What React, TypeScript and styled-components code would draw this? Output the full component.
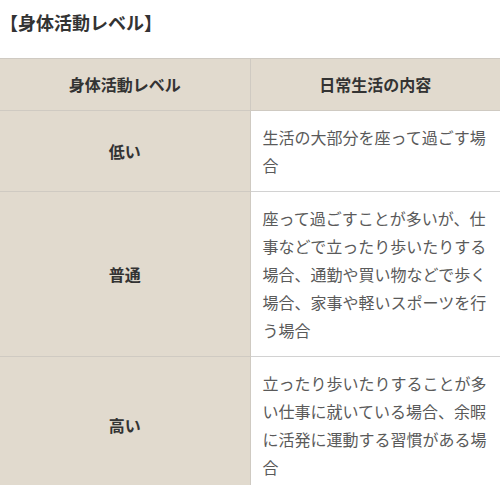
import React from "react";
import styled, { createGlobalStyle } from "styled-components";

const Global = createGlobalStyle`
  html, body { margin: 0; padding: 0; background: #fff; }
  body { font-family: "Noto Sans CJK JP", "Noto Sans", sans-serif; }
`;

const Page = styled.div`
  width: 500px;
`;

const Title = styled.h3`
  margin: 0;
  padding: 8px 0 0 0;
  height: 58px;
  box-sizing: border-box;
  font-size: 18px;
  line-height: 28px;
  font-weight: 700;
  color: #333;
`;

const Table = styled.table`
  width: 500px;
  border-collapse: collapse;
  table-layout: fixed;
`;

const HeadCell = styled.th`
  background: #e1dace;
  color: #333;
  font-size: 16px;
  line-height: 27px;
  font-weight: 700;
  padding: 12px;
  text-align: center;
  border: 1px solid #cfcac2;
  border-left: none;
  &:last-child { border-right: none; }
`;

const LevelCell = styled.th`
  background: #e1dace;
  color: #333;
  font-size: 16px;
  line-height: 28px;
  font-weight: 700;
  padding: 12px;
  text-align: center;
  vertical-align: middle;
  border: 1px solid #cfcac2;
  border-left: none;
`;

const BodyCell = styled.td`
  background: #fff;
  color: #5a5a5a;
  font-size: 16px;
  line-height: 28px;
  font-weight: 400;
  padding: 12px;
  text-align: left;
  vertical-align: top;
  border: 1px solid #d2d2d2;
  border-right: none;
`;

const rows = [
  { level: "低い", text: "生活の大部分を座って過ごす場合" },
  {
    level: "普通",
    text: "座って過ごすことが多いが、仕事などで立ったり歩いたりする場合、通勤や買い物などで歩く場合、家事や軽いスポーツを行う場合",
  },
  {
    level: "高い",
    text: "立ったり歩いたりすることが多い仕事に就いている場合、余暇に活発に運動する習慣がある場合",
  },
];

export default function App() {
  return (
    <Page>
      <Global />
      <Title>【身体活動レベル】</Title>
      <Table>
        <thead>
          <tr>
            <HeadCell>身体活動レベル</HeadCell>
            <HeadCell>日常生活の内容</HeadCell>
          </tr>
        </thead>
        <tbody>
          {rows.map((r) => (
            <tr key={r.level}>
              <LevelCell>{r.level}</LevelCell>
              <BodyCell>{r.text}</BodyCell>
            </tr>
          ))}
        </tbody>
      </Table>
    </Page>
  );
}
